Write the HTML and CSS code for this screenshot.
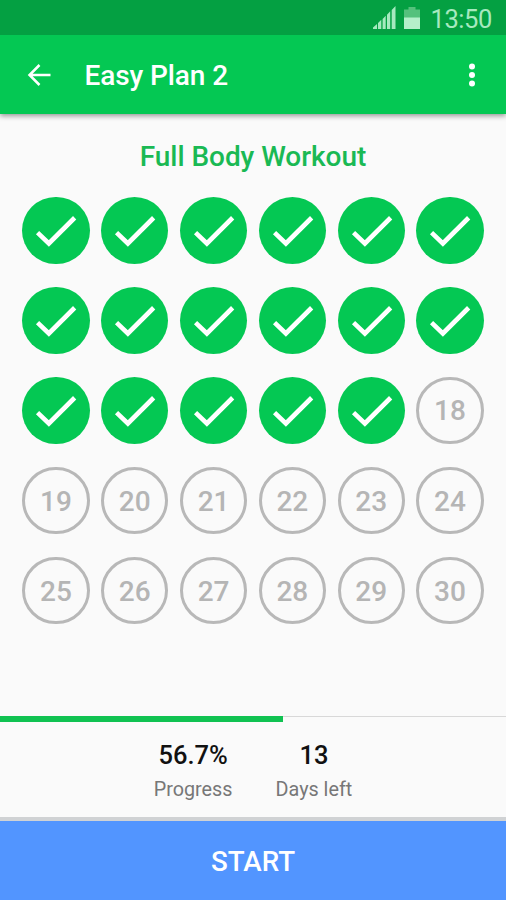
FILE: index.html
```html
<!DOCTYPE html>
<html lang="en">
<head>
<meta charset="utf-8">
<title>Easy Plan 2</title>
<link rel="stylesheet" href="styles.css">
</head>
<body>
<svg class="defs" aria-hidden="true">
  <symbol id="check" viewBox="0 0 67 67"><path d="M15.500 35.500 26.800 46.300 52.500 20.700" fill="none" stroke="#fff" stroke-width="4.600"/></symbol>
</svg>
<div class="screen">
  <div class="status">
    <svg class="signal" width="24" height="24" viewBox="0 0 24 24" fill="#a6e9bf"><path d="M0 23v-1.500l4-3.500V23zM5 23v-6l3.300-3.200V23zM9.600 23V13l3.100-3.300V23zM14 23V8.700l3.200-3.500V23zM18.700 23V4L22.500 0v23z"/></svg>
    <svg class="battery" width="16" height="22" viewBox="0 0 16 22"><path d="M4.500 0h7v2.500H16V11H0V2.500h4.500z" fill="#55c17c"/><path d="M0 10.500h16V22H0z" fill="#b5f0ca"/></svg>
    <span class="clock">13:50</span>
  </div>
  <header class="bar">
    <svg class="back" width="24" height="22" viewBox="0 0 24 22" fill="none" stroke="#fff" stroke-width="2.500"><path d="M12.500 1 2.500 11l10 10M2.500 11H23.500"/></svg>
    <h1 class="title">Easy Plan 2</h1>
    <svg class="more" width="8" height="24" viewBox="0 0 8 24" fill="#fff"><circle cx="4" cy="3.500" r="3"/><circle cx="4" cy="12" r="3"/><circle cx="4" cy="20.500" r="3"/></svg>
  </header>
  <main class="plan">
    <h2 class="heading">Full Body Workout</h2>
    <div class="days">
      <div class="day done"><svg><use href="#check"/></svg></div>
      <div class="day done"><svg><use href="#check"/></svg></div>
      <div class="day done"><svg><use href="#check"/></svg></div>
      <div class="day done"><svg><use href="#check"/></svg></div>
      <div class="day done"><svg><use href="#check"/></svg></div>
      <div class="day done"><svg><use href="#check"/></svg></div>
      <div class="day done"><svg><use href="#check"/></svg></div>
      <div class="day done"><svg><use href="#check"/></svg></div>
      <div class="day done"><svg><use href="#check"/></svg></div>
      <div class="day done"><svg><use href="#check"/></svg></div>
      <div class="day done"><svg><use href="#check"/></svg></div>
      <div class="day done"><svg><use href="#check"/></svg></div>
      <div class="day done"><svg><use href="#check"/></svg></div>
      <div class="day done"><svg><use href="#check"/></svg></div>
      <div class="day done"><svg><use href="#check"/></svg></div>
      <div class="day done"><svg><use href="#check"/></svg></div>
      <div class="day done"><svg><use href="#check"/></svg></div>
      <div class="day">18</div>
      <div class="day">19</div>
      <div class="day">20</div>
      <div class="day">21</div>
      <div class="day">22</div>
      <div class="day">23</div>
      <div class="day">24</div>
      <div class="day">25</div>
      <div class="day">26</div>
      <div class="day">27</div>
      <div class="day">28</div>
      <div class="day">29</div>
      <div class="day">30</div>
    </div>
  </main>
  <div class="track"><div class="fill" style="width:56%"></div></div>
  <div class="stats">
    <div class="stat"><div class="value">56.7%</div><div class="label">Progress</div></div>
    <div class="stat"><div class="value">13</div><div class="label">Days left</div></div>
  </div>
  <button class="start">START</button>
</div>
</body>
</html>
```
FILE: styles.css
```css
* { box-sizing: border-box; }
body { margin: 0; font-family: Roboto, "Liberation Sans", sans-serif; background: #fafafa; }
.defs { position: absolute; width: 0; height: 0; }
.screen { display: flex; flex-direction: column; width: 506px; height: 900px; overflow: hidden; }
.status { display: flex; flex: none; z-index: 1; justify-content: flex-end; height: 35px; padding-right: 14px; background: #04a042; }
.signal { margin: 6px 7px 0 0; }
.battery { margin: 7px 10px 0 0; }
.clock { color: #a6e9bf; font-size: 25.500px; line-height: 39px; letter-spacing: -0.4px; }
.bar { display: flex; flex: none; align-items: center; height: 78.500px; padding: 1px 30px 0 27px; background: #04c853; box-shadow: 0 2px 5px rgba(0, 0, 0, .4); }
.title { flex: 1; margin: 2px 0 0 33.500px; color: #fff; font-size: 28px; font-weight: 500; line-height: 34px; letter-spacing: -0.1px; }
.plan { flex: 1; padding: 26.500px 22.400px 0; }
.heading { margin: 0; color: #1ab954; font-size: 28px; font-weight: 500; line-height: 34px; letter-spacing: -0.05px; text-align: center; }
.days { display: grid; grid-template-columns: repeat(6, 67.200px); justify-content: space-between; row-gap: 22.900px; margin-top: 22.700px; }
.day { display: flex; align-items: center; justify-content: center; height: 67.200px; padding-top: 1px; border: 3px solid #b8b8b8; border-radius: 50%; color: #b5b5b5; font-size: 28px; font-weight: 500; }
.day.done { padding: 0; border: 0; background: #04c853; }
.day svg { display: block; width: 67.200px; height: 67.200px; }
.track { flex: none; height: 6px; border-top: 1px solid #d8d8d8; }
.fill { height: 6px; margin-top: -1px; background: #10c251; }
.stats { display: flex; flex: none; justify-content: center; gap: 43px; height: 99px; padding-top: 16px; border-bottom: 4px solid #d0d2d4; }
.stat { text-align: center; }
.value { color: #111; font-size: 25.500px; font-weight: 500; line-height: 34px; }
.label { margin-top: 5px; color: #777; font-size: 19.800px; line-height: 26px; }
.start { flex: none; height: 79px; padding: 2px 0 0; border: 0; background: #5295ff; color: #fff; font: 500 27.700px Roboto, "Liberation Sans", sans-serif; }
```
